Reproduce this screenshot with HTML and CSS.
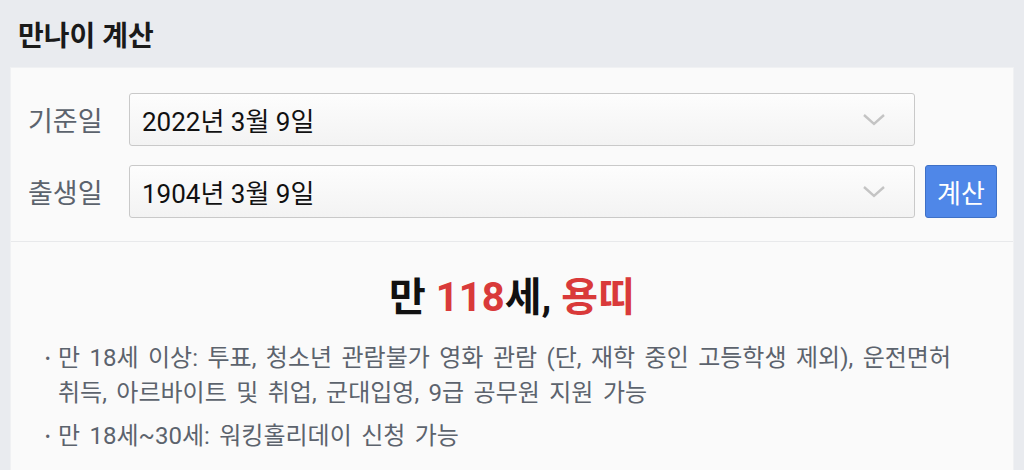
FILE: index.html
```html
<!DOCTYPE html>
<html lang="ko">
<head>
    <meta charset="UTF-8">
    <meta name="viewport" content="width=device-width, initial-scale=1.0">
    <title>만나이 계산</title>
    <link rel="stylesheet" href="styles.css">
</head>
<body>
    <h1 class="page-title">만나이 계산</h1>
    <div class="card">
        <form class="calc-form">
            <label class="field-label" for="base">기준일</label>
            <div class="date-select" id="base">
                <span>2022년 3월 9일</span>
                <svg class="chevron" viewBox="0 0 24 14" width="24" height="14"><polyline points="2,2 12,11 22,2" fill="none" stroke="#c4c4c4" stroke-width="2.4"/></svg>
            </div>
            <div></div>

            <label class="field-label" for="birth">출생일</label>
            <div class="date-select" id="birth">
                <span>1904년 3월 9일</span>
                <svg class="chevron" viewBox="0 0 24 14" width="24" height="14"><polyline points="2,2 12,11 22,2" fill="none" stroke="#c4c4c4" stroke-width="2.4"/></svg>
            </div>
            <button type="button" class="calc-btn">계산</button>
        </form>

        <div class="result">
            <h2 class="result-title">만 <em>118</em>세, <em>용띠</em></h2>
            <ul class="notes">
                <li>만 18세 이상: 투표, 청소년 관람불가 영화 관람 (단, 재학 중인 고등학생 제외), 운전면허 취득, 아르바이트 및 취업, 군대입영, 9급 공무원 지원 가능</li>
                <li>만 18세~30세: 워킹홀리데이 신청 가능</li>
            </ul>
        </div>
    </div>
</body>
</html>
```

FILE: styles.css
```css
body {
    margin: 0;
    background-color: #e9ebef;
    font-family: Roboto, "Noto Sans CJK KR", sans-serif;
    color: #111;
}

.page-title {
    margin: 0;
    padding: 19px 18px 12px;
    font-size: 28px;
    line-height: 36px;
    font-weight: 700;
    color: #1a1a1a;
}

.card {
    margin: 0 10px;
    background: #fafafa;
    border: 1px solid #f0f1f3;
    height: 420px;
}

.calc-form {
    display: grid;
    grid-template-columns: 91px 1fr 72px;
    column-gap: 10px;
    row-gap: 19px;
    padding: 25px 16px 23px 17px;
    border-bottom: 1px solid #e8e9eb;
}

.field-label {
    align-self: center;
    font-size: 27px;
    color: #5c636d;
}

.date-select {
    height: 51px;
    display: flex;
    align-items: center;
    justify-content: space-between;
    padding: 0 28px 0 12px;
    border: 1px solid #c9c9c9;
    border-radius: 3px;
    background: linear-gradient(#fdfdfd, #f3f3f3);
    font-size: 26px;
    color: #111;
}

.calc-btn {
    height: 53px;
    border: 1px solid #3e70c6;
    border-radius: 3px;
    background-color: #4f87e8;
    color: #fff;
    font-family: "Noto Sans CJK KR", sans-serif;
    font-size: 26px;
    padding: 0;
    cursor: pointer;
}

.result {
    padding: 32px 0 0;
}

.result-title {
    margin: 0;
    text-align: center;
    font-size: 40px;
    line-height: 48px;
    font-weight: 700;
    color: #111;
}

.result-title em {
    font-style: normal;
    color: #d93a3a;
}

.notes {
    list-style: none;
    margin: 19px 0 0;
    padding: 0 40px 0 47px;
    font-size: 24px;
    line-height: 35px;
    word-spacing: 3.5px;
    color: #5c636d;
    word-break: keep-all;
}

.notes li {
    position: relative;
    margin-bottom: 8px;
}

.notes li::before {
    content: "•";
    position: absolute;
    left: -13px;
    font-size: 16px;
}
```
